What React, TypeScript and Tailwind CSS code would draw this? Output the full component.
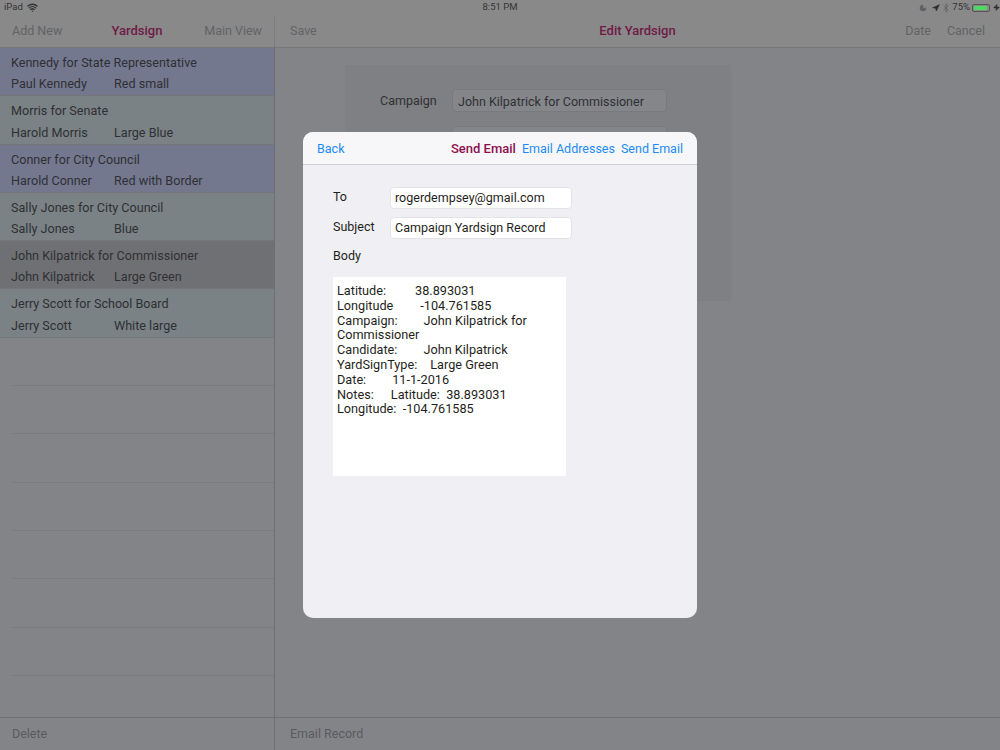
import React from 'react';
import { Bluetooth, Moon, Navigation, Wifi, Zap } from 'lucide-react';

const signs = [
  { title: 'Kennedy for State Representative', name: 'Paul Kennedy', type: 'Red small', tone: 'bg-[#74788f]' },
  { title: 'Morris for Senate', name: 'Harold Morris', type: 'Large Blue', tone: 'bg-[#7a8285]' },
  { title: 'Conner for City Council', name: 'Harold Conner', type: 'Red with Border', tone: 'bg-[#74788f]' },
  { title: 'Sally Jones for City Council', name: 'Sally Jones', type: 'Blue', tone: 'bg-[#7a8285]' },
  { title: 'John Kilpatrick for Commissioner', name: 'John Kilpatrick', type: 'Large Green', tone: 'bg-[#6f7073]' },
  { title: 'Jerry Scott for School Board', name: 'Jerry Scott', type: 'White large', tone: 'bg-[#7a8285]' },
];

const bodyLines = [
  { label: 'Latitude:', value: '38.893031', gap: 'ml-[29px]' },
  { label: 'Longitude', value: '-104.761585', gap: 'ml-[27px]' },
  { label: 'Campaign:', value: 'John Kilpatrick for', gap: 'ml-[26px]' },
  { label: 'Commissioner', value: '', gap: '' },
  { label: 'Candidate:', value: 'John Kilpatrick', gap: 'ml-[26px]' },
  { label: 'YardSignType:', value: 'Large Green', gap: 'ml-[13px]' },
  { label: 'Date:', value: '11-1-2016', gap: 'ml-[26px]' },
  { label: 'Notes:', value: 'Latitude:  38.893031', gap: 'ml-[17px]' },
  { label: 'Longitude:  -104.761585', value: '', gap: '' },
];

function SignRow({ title, name, type, tone }: { title: string; name: string; type: string; tone: string }) {
  return (
    <div className={`h-[48.3px] shrink-0 pl-[11px] pt-[4px] border-b border-[#74767a] text-[12.6px] leading-[21.3px] text-[#2f3033] ${tone}`}>
      <div>{title}</div>
      <div className="flex">
        <span className="w-[103px]">{name}</span>
        <span>{type}</span>
      </div>
    </div>
  );
}

export default function App() {
  return (
    <div className="relative w-[1000px] h-[750px] overflow-hidden bg-[#838488] font-['Roboto',sans-serif] flex flex-col">
      <div className="bg-[#898989] border-b border-[#76777a] h-[48px] flex flex-col shrink-0">
        <div className="relative h-[15px] pl-1 flex items-center justify-between text-[9.5px] text-[#333436]">
          <div className="flex items-center gap-1">
            <span>iPad</span>
            <Wifi size={11} strokeWidth={3} />
          </div>
          <span className="absolute left-1/2 -translate-x-1/2">8:51 PM</span>
          <div className="flex items-center">
            <Moon size={8} className="text-[#5f6063] fill-[#5f6063] mr-[5px]" />
            <Navigation size={8} className="text-[#2e2f31] fill-[#2e2f31] mr-[1px]" />
            <Bluetooth size={10} className="text-[#5f6063]" />
            <span className="ml-[1px] mr-[2px]">75%</span>
            <div className="w-[18px] h-[8px] border border-[#555] rounded-[2px] p-[1px] flex">
              <div className="w-[13px] bg-[#4cd964] rounded-[1px]" />
            </div>
            <Zap size={7} className="ml-[3px] text-[#2e2f31] fill-[#2e2f31]" />
          </div>
        </div>
        <div className="flex-1 flex text-[12.5px] leading-[31px] text-[#626366]">
          <div className="w-[275px] border-r border-[#7a7b7e] px-3 grid grid-cols-[1fr_auto_1fr]">
            <span>Add New</span>
            <span className="text-[13px] font-medium text-[#6f1a47]">Yardsign</span>
            <span className="text-right">Main View</span>
          </div>
          <div className="relative flex-1 px-[15px] flex justify-between">
            <span>Save</span>
            <span className="absolute left-1/2 -translate-x-1/2 text-[13px] font-medium text-[#6f1a47]">Edit Yardsign</span>
            <div className="flex gap-4">
              <span>Date</span>
              <span>Cancel</span>
            </div>
          </div>
        </div>
      </div>

      <div className="flex-1 flex min-h-0">
        <div className="w-[275px] border-r border-[#6d6e71] flex flex-col">
          {signs.map((s) => (
            <SignRow key={s.title} {...s} />
          ))}
          {Array.from({ length: 7 }).map((_, i) => (
            <div key={i} className="h-[48.3px] shrink-0 ml-3 border-b border-[#7a7b7e]" />
          ))}
        </div>
        <div className="flex-1 pl-[70px] pt-[17px]">
          <div className="w-[386px] h-[236px] bg-[#7f8083] pt-[24px] pl-[35px]">
            <div className="flex items-center h-[23px] text-[12.5px] text-[#2f3033]">
              <span className="w-[72px] pt-[2px]">Campaign</span>
              <div className="w-[215px] h-[23px] px-[5px] leading-[23px] whitespace-nowrap rounded-[4px] border border-[#797a7d] bg-[#85868a]">
                John Kilpatrick for Commissioner
              </div>
            </div>
            <div className="mt-[14px] ml-[72px] w-[215px] h-[22px] rounded-[4px] border border-[#797a7d] bg-[#85868a]" />
          </div>
        </div>
      </div>

      <div className="h-[33px] shrink-0 bg-[#838488] border-t border-[#6f7073] flex text-[12.5px] leading-[32px] text-[#5a5b5e]">
        <div className="w-[275px] border-r border-[#6d6e71] pl-3">Delete</div>
        <div className="pl-[15px]">Email Record</div>
      </div>

      {/* modal sheet */}
      <div className="absolute left-[303px] top-[132px] w-[394px] h-[486px] rounded-[10px] overflow-hidden bg-[#efeff4] text-[12.5px] text-[#1f1f21]">
        <div className="h-[33px] bg-[#f7f7f9] border-b border-[#cfcfd3] px-[14px] flex items-center justify-between leading-[31px] text-[#1c8cf5]">
          <span>Back</span>
          <div className="flex gap-[6px]">
            <span className="text-[13px] font-medium text-[#8e0f4f]">Send Email</span>
            <span>Email Addresses</span>
            <span>Send Email</span>
          </div>
        </div>
        <div className="pl-[30px] pt-[22px]">
          <div className="flex h-[22px] leading-[20px]">
            <span className="w-[57px]">To</span>
            <div className="w-[182px] h-[22px] px-[4px] leading-[20px] bg-white rounded-[4px] border border-[#e4e4e8]">rogerdempsey@gmail.com</div>
          </div>
          <div className="flex h-[22px] mt-[8px] leading-[20px]">
            <span className="w-[57px]">Subject</span>
            <div className="w-[182px] h-[22px] px-[4px] leading-[20px] bg-white rounded-[4px] border border-[#e4e4e8]">Campaign Yardsign Record</div>
          </div>
          <div className="mt-[7px] h-[22px] leading-[20px]">Body</div>
          <div className="mt-[9px] w-[233px] h-[199px] bg-white px-1 pt-[7px] text-[12.7px] leading-[14.8px] whitespace-pre">
            {bodyLines.map((l) => (
              <div key={l.label}>
                <span>{l.label}</span>
                {l.value && <span className={l.gap}>{l.value}</span>}
              </div>
            ))}
          </div>
        </div>
      </div>
    </div>
  );
}
